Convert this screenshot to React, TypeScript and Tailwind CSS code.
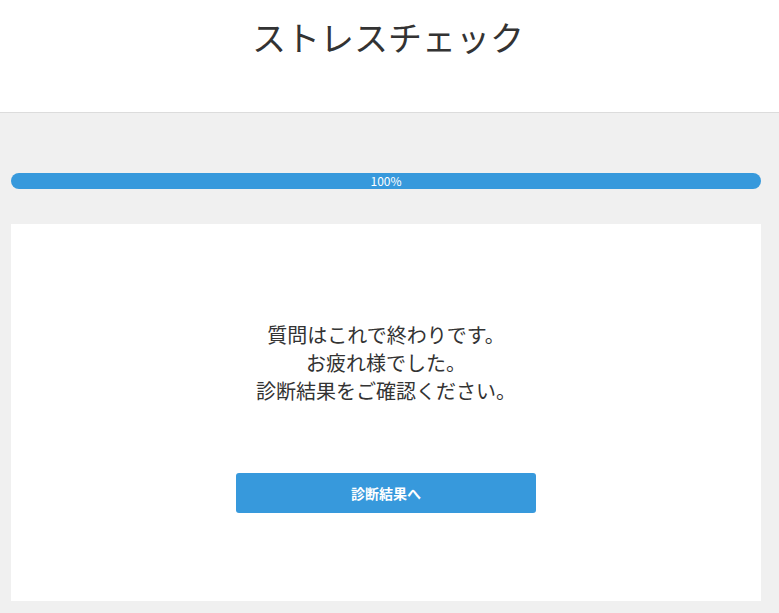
const font = { fontFamily: '"Noto Sans CJK JP", "Noto Sans", sans-serif' };

export default function App() {
  return (
    <div className="min-h-[613px] bg-[#f0f0f0] text-[#333]" style={font}>
      <header className="h-[113px] bg-white border-b border-[#dcdcdc] flex justify-center">
        <h1 className="mt-[13px] mr-[3px] text-[34px] leading-[48px]">ストレスチェック</h1>
      </header>

      <div className="w-[750px] ml-[11px] pt-[60px]">
        <div className="h-4 rounded-full bg-[#3799dc] flex items-center justify-center">
          <span className="text-[12px] leading-4 text-white">100%</span>
        </div>

        <div className="mt-[35px] h-[377px] bg-white flex flex-col items-center pt-[97px]">
          <p className="text-center text-[20px] leading-[28px]">
            質問はこれで終わりです。
            <br />
            お疲れ様でした。
            <br />
            診断結果をご確認ください。
          </p>
          <button className="mt-[68px] w-[300px] h-10 rounded-[3px] bg-[#3799dc] text-white text-[14px] font-bold">
            診断結果へ
          </button>
        </div>
      </div>
    </div>
  );
}
